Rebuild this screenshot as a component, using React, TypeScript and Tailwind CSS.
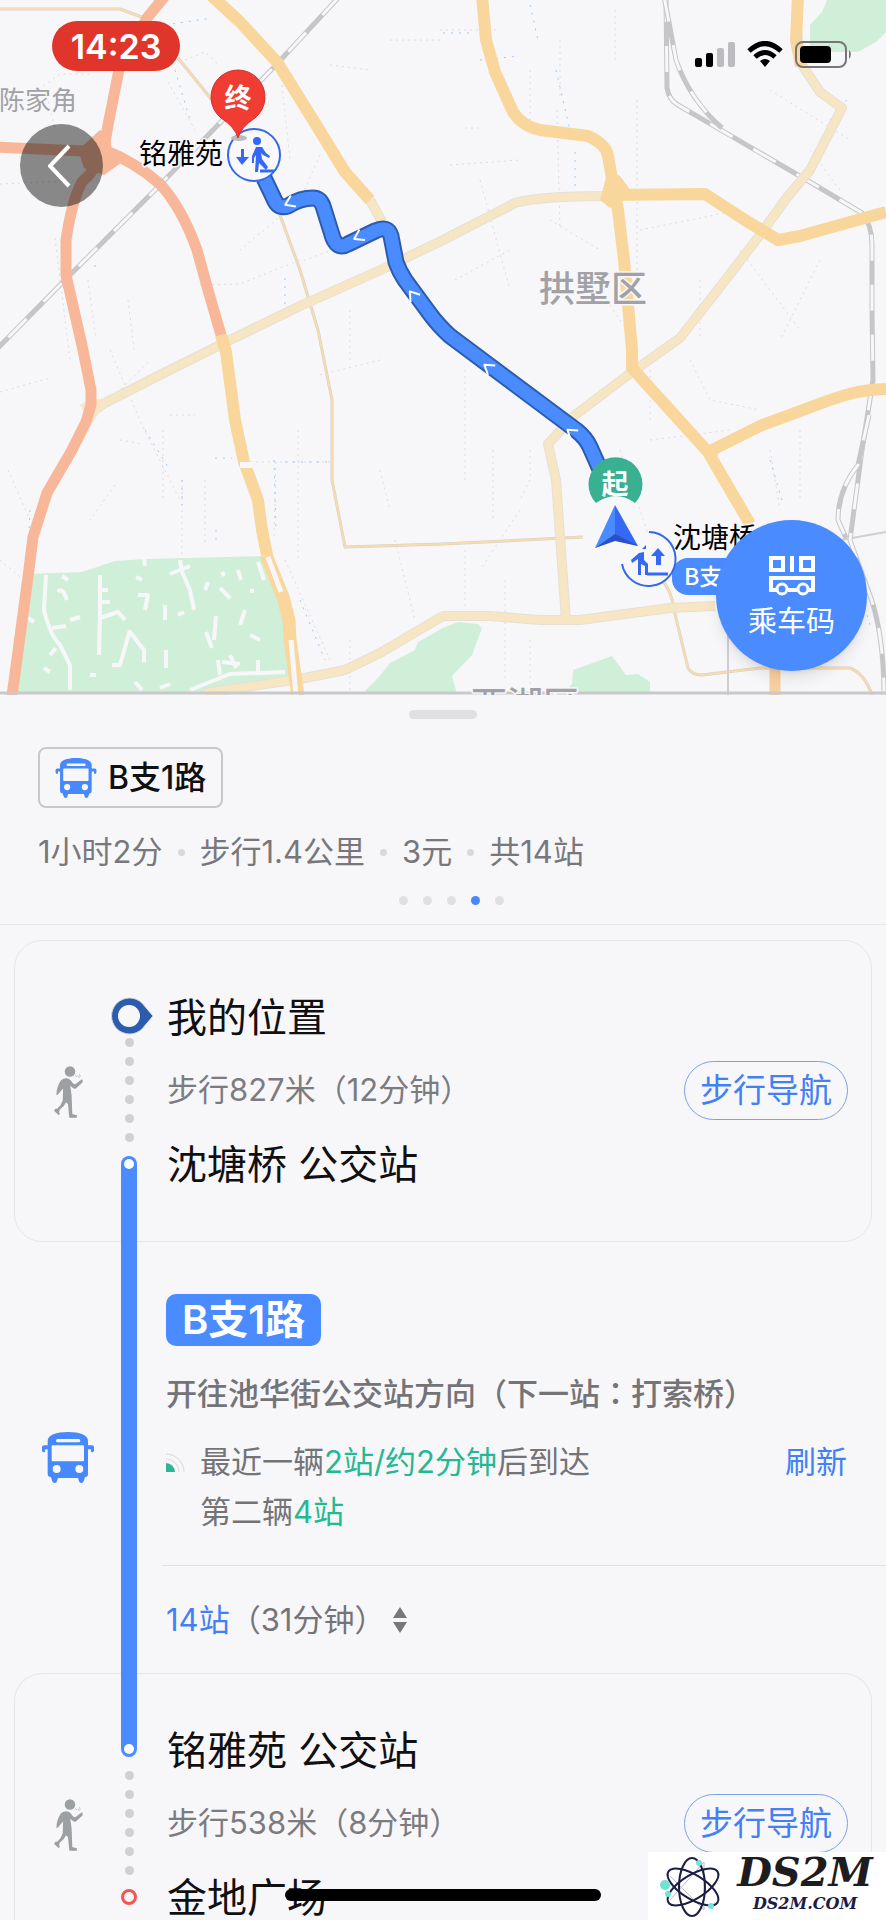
import type { ReactNode } from 'react'
import clsx from 'clsx'

const ORANGE_ROADS = [
  'M165 -4L147 18L119 70L108 125L104 148Q98 168 82 182Q72 200 66 240L66 275L83 350L91 390V405L86 422L72 450L47 493L33 537L28 577L12 696',
  'M-4 147L60 150L108 152',
  'M104 150Q135 162 160 184Q182 208 197 250L208 290L221 335',
]

const YELLOW_ROADS = [
  'M212 -4L240 22L277 62L310 115L345 172L370 200',
  'M221 335L226 352L235 420L244 462L258 500L262 530L267 555',
  'M482 -4L486 40L495 72L513 112Q522 126 540 130L588 136Q606 144 608 156L614 190L618 210L624 260L632 350V368L708 452L750 524',
  'M604 195L705 194L745 220L778 240L800 236L886 212',
  'M708 452L760 426L830 400Q862 388 890 389',
]

const PALE_ROADS = [
  'M92 412L105 403L150 380L230 340L300 306L385 268L443 240L515 203Q540 196 605 196',
  'M797 30L800 62L820 92L842 108L810 170L785 200L760 235L720 287L680 338L632 372L575 415L548 444L556 480L566 620',
  'M205 693L300 679L345 670L380 653L443 616H490L540 620H580L670 608L715 606',
  'M370 200L382 222',
]

const RAILWAYS = [
  'M340 -4L275 66L155 190L60 285L-4 350',
  'M666 -4L667 88Q669 100 678 105L810 182L862 213Q872 225 872 245V310L873 380L862 450L850 540L868 590Q884 630 884 696',
  'M664 -4L676 60Q690 100 722 128',
  'M869 415L858 465Q838 490 838 520L846 538',
]

const THIN_ROADS = [
  'M-4 9H120L147 19',
  'M178 58L212 100',
  'M280 215L300 270L318 330L332 400V480L345 547L443 544L583 537',
  'M660 578Q672 590 674 610L688 668Q692 675 702 675L760 668H850Q865 674 872 695',
]

const STREETS = [
  'M24 100L60 74H92', 'M45 90L55 128', 'M0 184L92 180', 'M185 60L205 52L220 66', 'M168 82L195 130',
  'M282 85L290 160', 'M320 155L300 200L240 250', 'M390 40H443', 'M330 65L370 70', 'M88 280L96 340',
  'M55 238L70 360', 'M128 300L134 350', 'M200 285L240 284L300 260', 'M345 245L300 262', 'M350 310V360',
  'M148 362L110 400', 'M0 392L50 378', 'M110 350L142 425L180 500', 'M170 415H195', 'M120 440L142 444',
  'M163 430V500', 'M182 480V560', 'M205 480V545', 'M238 462H330', 'M276 462L274 540', 'M298 430V560',
  'M320 375L380 360', 'M115 485L90 520', 'M380 470L390 510', 'M285 560L330 660', 'M395 540L415 620',
  'M465 370V480', 'M493 450V520', 'M520 510L480 570', 'M465 550V610', 'M505 580V680', 'M530 640V690',
  'M465 128H483', 'M450 165L520 160', 'M530 70V125', 'M560 40V100', 'M557 110L560 230', 'M637 100V280',
  'M480 180L510 290', 'M455 280L510 250', 'M615 10V60', 'M550 220L600 250', 'M440 30H500', 'M640 230L740 210',
  'M770 90L850 140', 'M810 150L840 190', 'M700 280L700 340', 'M740 250L800 330', 'M820 260L780 340',
  'M650 370V420', 'M690 360L710 400L760 410', 'M650 440L730 430', 'M620 450L650 540', 'M770 450L780 510',
  'M530 450V480L520 500', 'M800 430V500', 'M0 560L24 580', 'M8 470L30 520', 'M350 640V690', 'M600 290L640 350',
]

const WATERWAYS = [
  'M443 33H470', 'M530 5L538 40', 'M556 70L570 130', 'M575 152V200', 'M165 25L212 18', 'M175 70L190 120',
  'M182 480V505', 'M274 460L276 530', 'M285 462H332', 'M215 458H232', 'M145 430L170 470', 'M285 278V306',
  'M95 265V270', 'M862 600L870 625', 'M480 60L520 56', 'M830 120L850 96', 'M30 510L26 600', 'M300 600L325 660',
  'M216 530V545', 'M770 460L782 500',
]

const PARK_PATHS = [
  'M46 575L44 610Q50 635 60 645L70 665V690', 'M100 575V612L99 655', 'M102 590H108M98 602H110', 'M100 618L118 612L125 620',
  'M180 560L182 572L190 590L194 610', 'M170 574L190 566', 'M58 592Q62 586 67 600', 'M62 576L68 580', 'M52 628L66 626',
  'M70 620L80 617', 'M50 655L56 648', 'M130 630L120 665H112', 'M130 632L144 650V662', 'M138 595H148L145 610', 'M136 577L142 580',
  'M220 588L230 598', 'M205 590L208 582', 'M222 572L224 576', 'M216 616L214 640', 'M206 632L212 648', 'M245 610L240 625',
  'M238 570L241 580', 'M258 562L264 580', 'M218 660L220 675M222 662L240 664', 'M230 655L236 668', 'M258 660V672',
  'M165 605V620', 'M166 650V668', 'M250 635L260 640', 'M250 591H254', 'M135 682L142 690', 'M160 688L170 684',
  'M90 675H96', 'M44 668L50 672', 'M190 690L230 674L285 672', 'M28 618L34 622', 'M144 558L145 566', 'M178 615L184 612',
]

const ROUTE =
  'M264 178L275 201Q279 209 288 206Q300 198 313 198Q320 198 323 206L333 238Q338 250 348 244L375 231Q388 225 391 236L396 262Q399 271 405 280L430 314Q438 325 450 336L576 430Q586 438 590 447L602 474'

const ROUTE_ARROWS = [
  { x: 287, y: 204, angle: -25 },
  { x: 356, y: 238, angle: -28 },
  { x: 411, y: 293, angle: 52 },
  { x: 486, y: 366, angle: 37 },
  { x: 569, y: 431, angle: 38 },
]

function CityMap() {
  return (
    <svg
      viewBox="0 0 886 695"
      preserveAspectRatio="xMidYMid slice"
      className="block h-full w-full"
      fill="none"
      strokeLinejoin="round"
      fontFamily='"Noto Sans CJK SC", sans-serif'
    >
      {/* parks */}
      <g fill="#d0efd9">
        <path d="M26 574L82 572L115 561L145 559L262 556L280 600L287 640L291 682L205 693H10Z" />
        <path d="M362 694L378 678L390 663L415 650L418 642L443 628L458 622L478 624L482 628L472 655L452 676L457 694Z" />
        <path d="M562 694L572 684L573 670L612 656L626 675L638 674L650 682V694Z" />
        <path d="M828 -2L822 12L810 25V52L858 52L876 42L890 28V-2Z" />
      </g>
      {PARK_PATHS.map((d) => (
        <path key={d} d={d} stroke="#f7f7fa" strokeWidth="4" />
      ))}

      {/* streets and water */}
      {STREETS.map((d) => (
        <path key={d} d={d} stroke="#dcdce0" strokeDasharray="2 4" />
      ))}
      {WATERWAYS.map((d) => (
        <path key={d} d={d} stroke="#9fcaf8" strokeDasharray="2 6" />
      ))}

      {/* roads */}
      {THIN_ROADS.map((d) => (
        <g key={d}>
          <path d={d} stroke="#d3d0cc" strokeWidth="3" />
          <path d={d} stroke="#f8dcae" strokeWidth="2" />
        </g>
      ))}
      <path d="M728 610V695M835 541L886 532" stroke="#cfcfd2" strokeWidth="2" />
      {RAILWAYS.map((d) => (
        <g key={d}>
          <path d={d} stroke="#c6c6c9" strokeWidth="5" />
          <path d={d} stroke="#f7f7fa" strokeWidth="3" strokeDasharray="26 24" />
        </g>
      ))}
      {PALE_ROADS.map((d) => (
        <path key={d} d={d} stroke="#e6e0d4" strokeWidth="10" />
      ))}
      {PALE_ROADS.map((d) => (
        <path key={d} d={d} stroke="#f6e6c3" strokeWidth="8" />
      ))}
      <path d="M80 405L88 400L110 398L92 423Z" fill="#f6e6c3" />
      <path d="M798 -4L796 40L801 66" stroke="#f9d79c" strokeWidth="12" />
      {YELLOW_ROADS.map((d) => (
        <path key={d} d={d} stroke="#f9d79c" strokeWidth="12" />
      ))}
      <path d="M608 170L620 176L632 192L622 202L610 208L600 200Z" fill="#f9d79c" />
      <path d="M695 440L708 446L722 442L716 460L708 462Z" fill="#f9d79c" />
      <path d="M266 555L283 597L289 620L290 640L298 696" stroke="#f9d79c" strokeWidth="13" />
      <path d="M268 557L281 592M291 640L296 696" stroke="#f7f7fa" strokeWidth="5" />
      <path d="M240 465H252" stroke="#f7f7fa" strokeWidth="6" />
      <path d="M775 668V696" stroke="#f9d0a0" strokeWidth="11" />
      {ORANGE_ROADS.map((d) => (
        <path key={d} d={d} stroke="#f8b799" strokeWidth="11" />
      ))}
      <path d="M100 130L110 136L112 152L128 158L104 175L84 168L78 150Z" fill="#f8b799" />

      {/* shade above the sheet */}
      <path d="M0 693H886" stroke="#c9c9cc" strokeWidth="3" />

      {/* place names */}
      <g fill="#a2a2a6" stroke="#f7f7fa" strokeWidth="3" paintOrder="stroke">
        <text x="-1" y="110" fontSize="26">陈家角</text>
        <text x="539" y="302" fontSize="36" fontWeight="500">拱墅区</text>
        <text x="471" y="718" fontSize="36" fontWeight="500">西湖区</text>
      </g>

      {/* bus route */}
      <path d={ROUTE} stroke="#2c5cae" strokeWidth="17" />
      <path d={ROUTE} stroke="#4a8cff" strokeWidth="13" />
      {ROUTE_ARROWS.map(({ x, y, angle }) => (
        <path
          key={x}
          d="M7 -6L-2 0L7 6"
          transform={`translate(${x} ${y}) rotate(${angle})`}
          stroke="#fff"
          strokeWidth="2"
        />
      ))}

      {/* stop: get off */}
      <text x="139" y="164" fontSize="28" fill="#000" stroke="#f7f7fa" strokeWidth="3" paintOrder="stroke">
        铭雅苑
      </text>
      <circle cx="254" cy="155" r="26" fill="#f9f9fc" stroke="#3568e8" strokeWidth="2" />
      <g fill="#3568f5">
        <path d="M241 149h3v8h5l-7 8-6-8h5z" />
        <circle cx="257" cy="141" r="4" />
        <path d="M256 147h6l4 6 4 3-1 2-6-3-2-2 1 6 6 8-2 3-7-7-1 9h-3l1-17-2 3v5h-2v-7z" />
      </g>
      <path d="M260 171H274" stroke="#3568f5" strokeWidth="3" />

      {/* destination pin */}
      <ellipse cx="239" cy="138" rx="8" ry="3" fill="#bbb" />
      <path d="M238 138Q235 127 221 118A27 27 0 1 1 255 118Q241 127 238 138Z" fill="#f03c32" stroke="#d2322a" />
      <text x="238" y="108" fontSize="27" fontWeight="700" textAnchor="middle" fill="#fff">终</text>

      {/* stop: get on */}
      <text x="673" y="548" fontSize="28" fill="#000" stroke="#f7f7fa" strokeWidth="3" paintOrder="stroke">
        沈塘桥
      </text>
      <rect x="672" y="558" width="120" height="37" rx="16" fill="#4a8cff" />
      <text x="684" y="585" fontSize="23" fontWeight="500" fill="#fff">B支1路</text>
      <circle cx="648" cy="559" r="27" fill="#f7f7fa" />
      <path d="M649 532A27 27 0 1 1 622 564" stroke="#3568e8" strokeWidth="2" />
      <g fill="#3568f5">
        <path d="M658 548l7 8h-4v9h-5v-9h-5z" />
        <path d="M631 560l8-7 5-1v8l4 4v11h-3v-9l-4-2v11h-3v-16l-6 4z" />
        <path d="M642 549l4-4v4z" />
      </g>
      <path d="M647 574H668" stroke="#3568f5" strokeWidth="3" />

      {/* origin marker */}
      <path d="M596 503A27 27 0 1 1 635 503Q616 489 596 503Z" fill="#38b091" />
      <text x="615" y="494" fontSize="27" fontWeight="700" textAnchor="middle" fill="#fff">起</text>
      <path d="M615 505L595 548L615 540Z" fill="#4a8cff" />
      <path d="M615 505L638 546L615 540Z" fill="#3568f5" />
      <path d="M595 548L615 534L638 546L615 541Z" fill="#2850c8" />
    </svg>
  )
}

function BusIcon({ className }: { className?: string }) {
  return (
    <svg viewBox="0 0 156 153" className={className} aria-hidden="true">
      <path
        fill="#4788fb"
        d="M78 0c36 0 60 10 60 26v14h12q6 0 6 6v10q-3 6-9 4v-8h-9v74q0 8-9 10l-5 14q-6 6-12 0l-4-12H48l-4 12q-6 6-12 0l-5-14q-10-2-10-10V52H9v8q-7 2-9-4V46q0-6 6-6h11V26C17 10 42 0 78 0z"
      />
      <rect x="42" y="21" width="73" height="10" rx="5" fill="#f7f7fa" />
      <rect x="29" y="40" width="97" height="48" rx="3" fill="#f7f7fa" />
      <circle cx="44" cy="111" r="12" fill="#f7f7fa" />
      <circle cx="112" cy="111" r="12" fill="#f7f7fa" />
    </svg>
  )
}

function WalkIcon() {
  return (
    <svg viewBox="0 0 87 158" className="h-[52px] w-[29px]" fill="#9da0a2" aria-hidden="true">
      <circle cx="48" cy="17" r="16" />
      <path d="M20 44Q32 34 44 39Q52 43 56 52L63 56L84 40Q88 44 86 50L66 68Q61 71 56 66L49 60L53 90L55 146L69 150V157H46L42 116L36 110Q30 124 17 133L15 140L17 146L14 150L0 137L3 130L10 129Q22 118 26 104L27 68L12 86L7 89Q6 66 20 44Z" />
      <path d="M63 29L69 33M72 30L77 36M77 25L79 32" stroke="#9da0a2" strokeWidth="2" />
    </svg>
  )
}

function RailDots() {
  return (
    <div className="flex flex-col gap-[10px]">
      {[0, 1, 2, 3, 4, 5].map((i) => (
        <span key={i} className="size-[9px] rounded-full bg-[#d0d0d3]" />
      ))}
    </div>
  )
}

interface WalkLegProps {
  from: string
  to: string
  detail: string
  rail: ReactNode
  last?: boolean
}

function WalkLeg({ from, to, detail, rail, last }: WalkLegProps) {
  return (
    <section
      className={clsx(
        'mx-[14px] flex border border-[#e6e6e9]',
        last ? 'rounded-t-[28px] border-b-0' : 'rounded-[28px]'
      )}
    >
      <div className="flex w-[106px] shrink-0 justify-center pt-[125px]">
        <WalkIcon />
      </div>
      <div className="flex w-4 shrink-0 flex-col items-center">{rail}</div>
      <div className={clsx('ml-[30px] flex-1 pt-[55px] pr-[23px]', !last && 'pb-[54px]')}>
        <h2 className="text-[40px] leading-[44px] font-normal text-[#101012]">{from}</h2>
        <div className="mt-[21px] mb-[23px] flex items-center justify-between">
          <p className="text-[31px] text-[#7c7c80]">{detail}</p>
          <button className="h-[59px] rounded-full border border-[#7aa2ea] px-[15px] text-[33px] leading-none text-[#4380f5]">
            步行导航
          </button>
        </div>
        <h2 className="text-[40px] leading-[44px] font-normal text-[#101012]">{to}</h2>
      </div>
    </section>
  )
}

function StatusIcons() {
  return (
    <svg viewBox="0 0 160 28" className="h-7 w-40" fill="none" aria-hidden="true">
      <rect x="1" y="17" width="7" height="9" rx="2" fill="#000" />
      <rect x="12" y="12" width="7" height="14" rx="2" fill="#000" />
      <rect x="23" y="7" width="7" height="19" rx="2" fill="#bcbcc0" />
      <rect x="34" y="1" width="7" height="25" rx="2" fill="#bcbcc0" />
      <path d="M55 10Q71 -5 87 10" stroke="#000" strokeWidth="5" />
      <path d="M61 16Q71 7 81 16" stroke="#000" strokeWidth="5" />
      <path d="M66 20Q71 16 76 20L71 26Z" fill="#000" />
      <rect x="102" y="1" width="50" height="25" rx="7" stroke="#77757a" strokeWidth="2" />
      <rect x="106" y="5" width="31" height="17" rx="4" fill="#000" />
      <path d="M155 9Q159 13 155 18Z" fill="#77757a" />
    </svg>
  )
}

function BusCodeIcon() {
  return (
    <svg viewBox="0 0 46 40" className="h-10 w-[46px]" fill="none" stroke="#fff" strokeWidth="4" aria-hidden="true">
      <path d="M2 2H14V14H2ZM32 2H44V14H32ZM23 0V16" />
      <path d="M8 34H2V22H44V34H39M19 34H28" />
      <circle cx="13" cy="33" r="5" strokeWidth="3" />
      <circle cx="34" cy="33" r="5" strokeWidth="3" />
    </svg>
  )
}

function Watermark() {
  return (
    <div className="absolute right-0 bottom-0 flex h-[68px] w-[238px] items-center bg-white pl-3">
      <svg viewBox="0 0 64 64" className="h-16 w-16 shrink-0" fill="none" aria-hidden="true">
        <path d="M10 46L44 8M44 8V56M10 22L44 56" stroke="#b9bac8" />
        <g stroke="#1b1d45" strokeWidth="2">
          <ellipse cx="32" cy="33" rx="13" ry="29" />
          <ellipse cx="33" cy="33" rx="12" ry="29" transform="rotate(58 33 33)" />
          <ellipse cx="33" cy="33" rx="12" ry="29" transform="rotate(-58 33 33)" />
        </g>
        <g fill="#71e3d3">
          <circle cx="5" cy="31" r="5" />
          <circle cx="8" cy="40" r="3" />
          <circle cx="39" cy="9" r="3" />
          <circle cx="51" cy="52" r="3" />
        </g>
      </svg>
      <div className="flex flex-1 flex-col items-center font-['DejaVu_Serif',serif] font-bold italic">
        <span className="text-[40px] leading-9 text-[#1d1d1f]">DS2M</span>
        <span className="text-base leading-7 text-[#1b1d45]">DS2M.COM</span>
      </div>
    </div>
  )
}

const SUMMARY = ['1小时2分', '步行1.4公里', '3元', '共14站']

export default function App() {
  return (
    <main className="relative min-h-screen overflow-hidden bg-[#f7f7fa] font-['Inter','Noto_Sans_CJK_SC',sans-serif]">
      {/* Map */}
      <div className="relative h-[695px]">
        <CityMap />
        <div className="absolute inset-x-0 top-0 flex items-start justify-between pt-[21px] pr-8 pl-[52px]">
          <time className="flex h-[50px] w-32 items-center justify-center rounded-full bg-[#e0352b] text-[34px] font-semibold text-white">
            14:23
          </time>
          <div className="pt-5">
            <StatusIcons />
          </div>
        </div>
        <button
          aria-label="返回"
          className="absolute top-[124px] left-5 flex size-[83px] items-center justify-center rounded-full bg-black/45 pr-1"
        >
          <svg viewBox="0 0 24 44" className="h-11 w-6" fill="none" stroke="#fff" strokeWidth="4">
            <path d="M21 2L2 22L21 42" />
          </svg>
        </button>
        <button className="absolute right-[19px] bottom-6 flex size-[151px] flex-col items-center justify-center gap-2 rounded-full bg-[#4a8cff] pt-1 text-[29px] leading-9 text-white shadow-lg">
          <BusCodeIcon />
          乘车码
        </button>
      </div>

      {/* Route summary */}
      <header className="flex flex-col border-b border-[#e6e6e9] pt-[15px] pb-[19px]">
        <span className="h-[9px] w-[68px] self-center rounded-full bg-[#e0e0e3]" />
        <div className="mt-7 ml-[38px] flex h-[61px] items-center gap-[11px] self-start rounded-lg border-2 border-[#c9c9cc] px-[15px]">
          <BusIcon className="h-10 w-[42px]" />
          <span className="text-[32px] font-medium text-[#101012]">B支1路</span>
        </div>
        <div className="mt-5 ml-[38px] flex h-12 items-center gap-[15px] text-[31px] text-[#78787c]">
          {SUMMARY.map((part, i) => (
            <div key={part} className="flex items-center gap-[15px]">
              {i > 0 && <span className="size-[7px] rounded-full bg-[#d9d9dc]" />}
              <span>{part}</span>
            </div>
          ))}
        </div>
        <div className="mt-5 flex justify-center gap-[15px] pl-4">
          {[0, 1, 2, 3, 4].map((i) => (
            <span key={i} className={clsx('size-[9px] rounded-full', i === 3 ? 'bg-[#4788fb]' : 'bg-[#e0e0e3]')} />
          ))}
        </div>
      </header>

      {/* Steps */}
      <div className="pt-[15px]">
        <WalkLeg
          from="我的位置"
          to="沈塘桥 公交站"
          detail="步行827米（12分钟）"
          rail={
            <>
              <svg viewBox="0 0 48 40" className="mt-[55px] mb-[2px] h-10 w-12 shrink-0" aria-hidden="true">
                <path d="M37 7L48 20L37 33A18 18 0 1 1 37 7Z" fill="#2c5cae" stroke="#d6d6da" />
                <circle cx="24" cy="20" r="11" fill="#f7f7fa" />
              </svg>
              <RailDots />
              <div className="mt-[14px] -mb-px flex w-full flex-1 justify-center rounded-t-full bg-[#4a8cff] pt-[3px]">
                <span className="size-[10px] rounded-full bg-white" />
              </div>
            </>
          }
        />

        <section className="flex pl-[15px]">
          <div className="flex w-[106px] shrink-0 items-center justify-center">
            <BusIcon className="h-[51px] w-[52px]" />
          </div>
          <div className="w-4 shrink-0 bg-[#4a8cff]" />
          <div className="ml-[25px] flex-1 text-[31px] text-[#747478]">
            <div className="pt-[52px] pr-[39px] pl-1">
              <h2 className="flex h-[52px] w-fit items-center rounded-[10px] bg-[#4a8cff] px-4 text-[40px] font-semibold text-white">
                B支1路
              </h2>
              <p className="mt-6 leading-[48px] font-medium">
                开往池华街公交站方向（下一站
                <span className="font-['Noto_Sans_CJK_TC',sans-serif] leading-none">：</span>打索桥）
              </p>
              <div className="mt-[19px] flex items-start leading-[50px]">
                <svg viewBox="0 0 20 20" className="mt-4 mr-[14px] size-5 shrink-0" fill="none" aria-hidden="true">
                  <path d="M0 10A9 9 0 0 1 9 19H0Z" fill="#2fb594" />
                  <path d="M0 6A13 13 0 0 1 13 19M0 1A18 18 0 0 1 18 19" stroke="#d9d9dc" />
                </svg>
                <div className="flex-1">
                  <p>
                    最近一辆<span className="text-[#24b893]">2站/约2分钟</span>后到达
                  </p>
                  <p>
                    第二辆<span className="text-[#24b893]">4站</span>
                  </p>
                </div>
                <button className="text-[#4380f5]">刷新</button>
              </div>
            </div>
            <hr className="mt-7 border-[#e0e0e3]" />
            <button className="mt-[30px] mb-[29px] ml-1 flex items-center leading-[48px]">
              <span className="text-[#4380f5]">14站</span>
              <span>（31分钟）</span>
              <svg viewBox="0 0 14 26" className="ml-2 h-[26px] w-[14px]" fill="#77777b" aria-hidden="true">
                <path d="M7 0L14 11H0ZM7 26L0 15H14Z" />
              </svg>
            </button>
          </div>
        </section>

        <WalkLeg
          last
          from="铭雅苑 公交站"
          to="金地广场"
          detail="步行538米（8分钟）"
          rail={
            <>
              <div className="-mt-px mb-[14px] flex h-[84px] w-full items-end justify-center rounded-b-full bg-[#4a8cff] pb-[3px]">
                <span className="size-[10px] rounded-full bg-white" />
              </div>
              <RailDots />
              <span className="mt-[14px] size-4 rounded-full border-3 border-[#f4574f]" />
            </>
          }
        />
      </div>

      <div className="absolute bottom-[19px] left-1/2 h-3 w-[316px] -translate-x-1/2 rounded-full bg-black" />
      <Watermark />
    </main>
  )
}
